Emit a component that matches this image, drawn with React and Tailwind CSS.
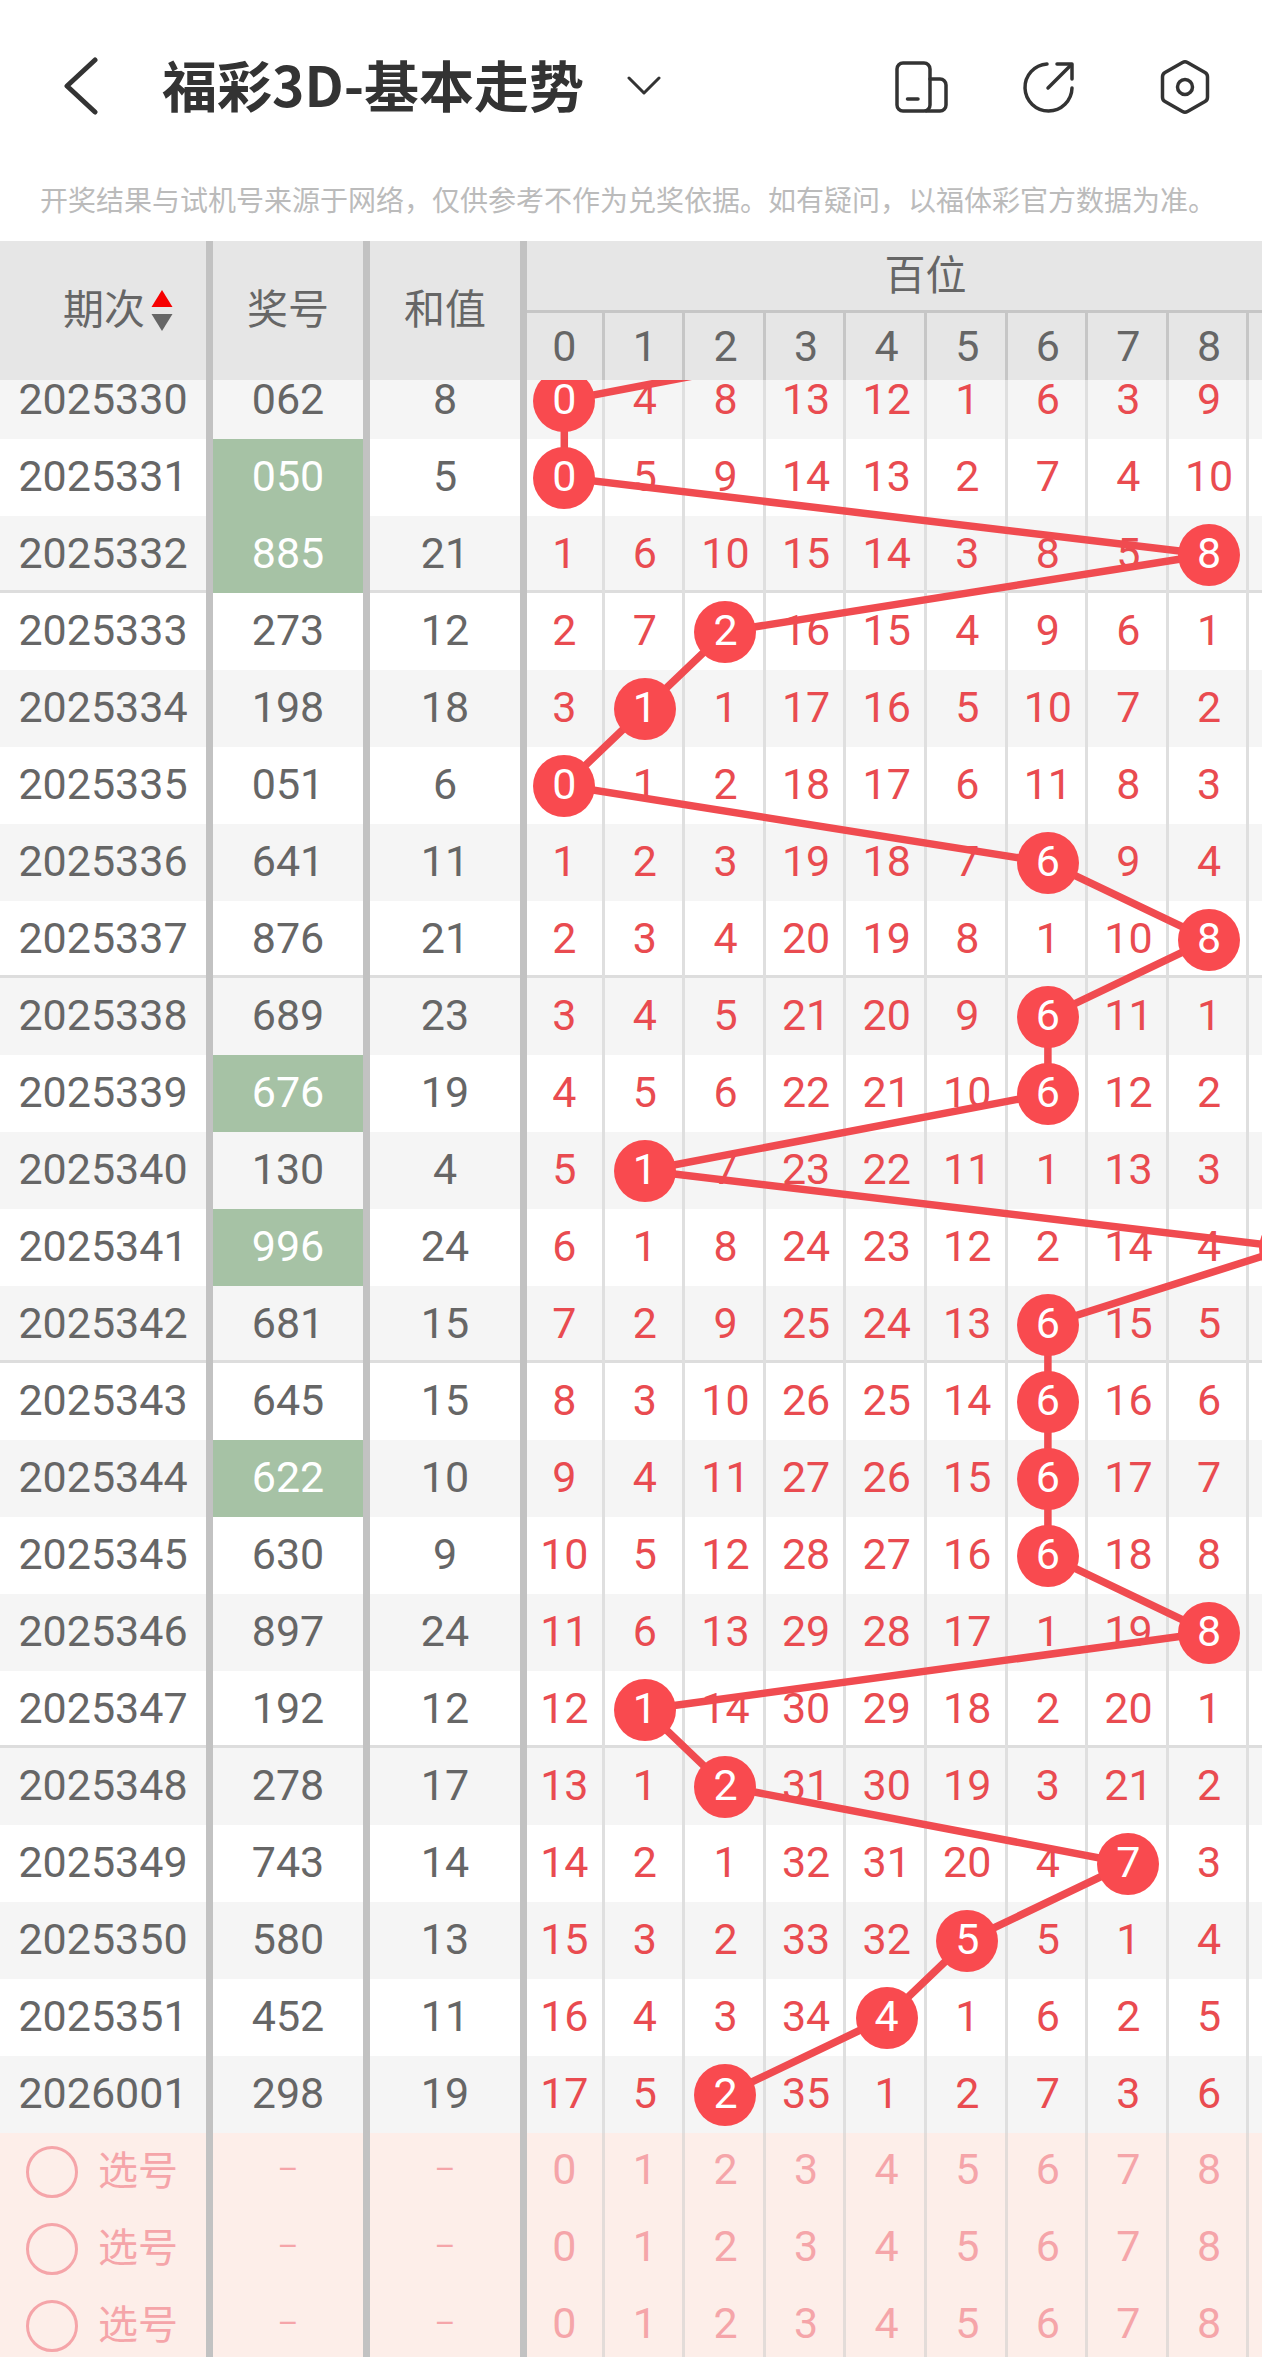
import React from 'react';

const numFont = "font-['Roboto','Noto_Sans_CJK_SC',sans-serif]";
const cjkFont = "font-['Noto_Sans_CJK_SC','Roboto',sans-serif]";

// period, draw, sum, miss counts for columns 0-8 (column 9 runs off the right edge)
const rows = [
    ['2025330', '062', 8, [0, 4, 8, 13, 12, 1, 6, 3, 9]],
    ['2025331', '050', 5, [0, 5, 9, 14, 13, 2, 7, 4, 10]],
    ['2025332', '885', 21, [1, 6, 10, 15, 14, 3, 8, 5, 8]],
    ['2025333', '273', 12, [2, 7, 2, 16, 15, 4, 9, 6, 1]],
    ['2025334', '198', 18, [3, 1, 1, 17, 16, 5, 10, 7, 2]],
    ['2025335', '051', 6, [0, 1, 2, 18, 17, 6, 11, 8, 3]],
    ['2025336', '641', 11, [1, 2, 3, 19, 18, 7, 6, 9, 4]],
    ['2025337', '876', 21, [2, 3, 4, 20, 19, 8, 1, 10, 8]],
    ['2025338', '689', 23, [3, 4, 5, 21, 20, 9, 6, 11, 1]],
    ['2025339', '676', 19, [4, 5, 6, 22, 21, 10, 6, 12, 2]],
    ['2025340', '130', 4, [5, 1, 7, 23, 22, 11, 1, 13, 3]],
    ['2025341', '996', 24, [6, 1, 8, 24, 23, 12, 2, 14, 4]],
    ['2025342', '681', 15, [7, 2, 9, 25, 24, 13, 6, 15, 5]],
    ['2025343', '645', 15, [8, 3, 10, 26, 25, 14, 6, 16, 6]],
    ['2025344', '622', 10, [9, 4, 11, 27, 26, 15, 6, 17, 7]],
    ['2025345', '630', 9, [10, 5, 12, 28, 27, 16, 6, 18, 8]],
    ['2025346', '897', 24, [11, 6, 13, 29, 28, 17, 1, 19, 8]],
    ['2025347', '192', 12, [12, 1, 14, 30, 29, 18, 2, 20, 1]],
    ['2025348', '278', 17, [13, 1, 2, 31, 30, 19, 3, 21, 2]],
    ['2025349', '743', 14, [14, 2, 1, 32, 31, 20, 4, 7, 3]],
    ['2025350', '580', 13, [15, 3, 2, 33, 32, 5, 5, 1, 4]],
    ['2025351', '452', 11, [16, 4, 3, 34, 4, 1, 6, 2, 5]],
    ['2026001', '298', 19, [17, 5, 2, 35, 1, 2, 7, 3, 6]],
];

const greenDraws = ['050', '885', '676', '996', '622'];
const digits = [0, 1, 2, 3, 4, 5, 6, 7, 8, 9];

const ROW_H = 77;
const colX = (d) => (d === 0 ? 564.3 : 644.9 + 80.6 * (d - 1));
const rowY = (i) => ROW_H / 2 + ROW_H * i;

const TrendLine = () => {
    const points = rows.map((r, i) => `${colX(Number(r[1][0]))},${rowY(i)}`);
    // the run continues upward from the previous period, hidden under the header
    points.unshift(`${colX(5)},${rowY(-1)}`);
    return (
        <svg className="absolute left-0 top-0 z-10 w-[1262px] h-[1771px] overflow-visible pointer-events-none">
            <polyline points={points.join(' ')} fill="none" stroke="#f04b50" strokeWidth="7.5" />
        </svg>
    );
};

// the separator is an inset line so numbers centre on the full cell width
const DigitCell = ({ first, children, className }) => (
    <div
        className={`${first ? 'w-[77.6px] pr-[3px]' : 'w-[80.6px]'} shrink-0 h-full flex items-center justify-center ${className}`}
    >
        {children}
    </div>
);

const DrawRow = ({ row, index }) => {
    const [period, draw, sum, misses] = row;
    const hit = Number(draw[0]);
    const striped = index % 2 === 0;
    // a rule closes every group of five periods
    const closesGroup = index % 5 === 2 && index < rows.length - 1;
    return (
        <div
            className={`flex h-[77px] text-[43px] text-[#666666] ${striped ? 'bg-[#f5f5f5]' : 'bg-white'} ${closesGroup ? 'shadow-[inset_0_-3px_0_#dddddd]' : ''}`}
        >
            <div className="w-[213px] shrink-0 border-r-[7px] border-[#c2c2c2] pb-[3px] flex items-center justify-center">{period}</div>
            <div className="w-[157px] shrink-0 border-r-[7px] border-[#c2c2c2] flex items-center justify-center">
                <div className={`w-full h-full pb-[3px] flex items-center justify-center ${greenDraws.includes(draw) ? 'bg-[#a6c2a5] text-white' : ''}`}>
                    {draw}
                </div>
            </div>
            <div className="w-[157px] shrink-0 border-r-[7px] border-[#c2c2c2] pb-[3px] flex items-center justify-center">{sum}</div>
            {digits.map((d) => (
                <DigitCell
                    key={d}
                    first={d === 0}
                    className={`shadow-[inset_-3px_0_0_#dfdfdf] text-[#e94b50] ${d === hit ? '' : 'pb-[3px]'}`}
                >
                    {d === hit ? (
                        <div className="relative z-20 w-[62px] h-[62px] pb-[3px] rounded-full bg-[#f94a4f] text-white flex items-center justify-center">
                            {misses[d]}
                        </div>
                    ) : (
                        misses[d]
                    )}
                </DigitCell>
            ))}
        </div>
    );
};

const PickRow = () => (
    <div className="flex h-[77px] shrink-0 text-[43px] bg-[#fdeee9] text-[#f5a5a9]">
        <div className="w-[213px] shrink-0 border-r-[7px] border-[#c2c2c2] flex items-center pl-[26px] gap-[20px]">
            <div className="w-[52px] h-[52px] rounded-full border-[3px] border-[#f5a5a9]"></div>
            <span className={`${cjkFont} text-[40px] leading-none pb-[7px]`}>选号</span>
        </div>
        <div className="w-[157px] shrink-0 border-r-[7px] border-[#c2c2c2] pb-[5px] flex items-center justify-center text-[32px]">–</div>
        <div className="w-[157px] shrink-0 border-r-[7px] border-[#c2c2c2] pb-[5px] flex items-center justify-center text-[32px]">–</div>
        {digits.map((d) => (
            <DigitCell key={d} first={d === 0} className="shadow-[inset_-3px_0_0_#e3dcd9] pb-[4px]">
                {d < 9 ? d : null}
            </DigitCell>
        ))}
    </div>
);

const TableHeader = () => (
    <div className={`relative z-30 flex h-[139px] bg-[#e6e6e6] text-[#666666] ${cjkFont} text-[41px]`}>
        <div className="w-[213px] shrink-0 border-r-[7px] border-[#c2c2c2] pb-[8px] flex items-center pl-[63px] gap-[6px]">
            <span className="leading-none">期次</span>
            <svg className="mt-[8px]" width="22" height="42" viewBox="0 0 22 42">
                <path d="M11 0 L21.5 17 L0.5 17 Z" fill="#f60000" />
                <path d="M0.5 24 L21.5 24 L11 41 Z" fill="#666666" />
            </svg>
        </div>
        <div className="w-[157px] shrink-0 border-r-[7px] border-[#c2c2c2] pb-[8px] flex items-center justify-center leading-none">奖号</div>
        <div className="w-[157px] shrink-0 border-r-[7px] border-[#c2c2c2] pb-[8px] flex items-center justify-center leading-none">和值</div>
        <div className="flex flex-col shrink-0">
            <div className="h-[72px] border-b-[3px] border-[#c6c6c6] pb-[7px] pr-[6px] flex items-center justify-center leading-none">百位</div>
            <div className={`flex h-[67px] ${numFont} text-[43px]`}>
                {digits.map((d) => (
                    <DigitCell key={d} first={d === 0} className="shadow-[inset_-3px_0_0_#c6c6c6]">
                        {d < 9 ? d : null}
                    </DigitCell>
                ))}
            </div>
        </div>
    </div>
);

const NavBar = () => (
    <div className="flex items-center h-[172px] text-[#333333]">
        <svg className="ml-[62px] shrink-0" width="38" height="58" viewBox="0 0 38 58" fill="none" stroke="#333333" strokeWidth="5" strokeLinecap="round" strokeLinejoin="round">
            <path d="M33 3 L5 29 L33 55" />
        </svg>
        <h1 className={`ml-[62px] pb-[5px] ${cjkFont} font-bold text-[55px] leading-none`}>福彩3D-基本走势</h1>
        <svg className="ml-[43px] mt-[-1px] shrink-0" width="34" height="20" viewBox="0 0 34 20" fill="none" stroke="#333333" strokeWidth="3" strokeLinecap="round" strokeLinejoin="round">
            <path d="M2 2 L17 17 L32 2" />
        </svg>
        <div className="ml-auto mr-[52px] mt-[2px] flex items-center">
            {/* phone and tablet */}
            <svg width="54" height="52" viewBox="0 0 54 52" fill="none" stroke="#333333" strokeWidth="3.5" strokeLinecap="round" strokeLinejoin="round">
                <rect x="2" y="2" width="33" height="48" rx="6" />
                <path d="M35 18 H45 a6 6 0 0 1 6 6 V44 a6 6 0 0 1 -6 6 H31" />
                <path d="M12.5 38 H23" />
            </svg>
            {/* share */}
            <svg className="ml-[73px]" width="54" height="54" viewBox="0 0 54 54" fill="none" stroke="#333333" strokeWidth="3.5" strokeLinecap="round" strokeLinejoin="round">
                <path d="M25 4 A23.5 23.5 0 1 0 50 28" />
                <path d="M26 28 L49 5" />
                <path d="M35 4 H50 V19" />
            </svg>
            {/* settings nut */}
            <svg className="ml-[84px]" width="50" height="56" viewBox="0 0 50 56" fill="none" stroke="#333333" strokeWidth="3.5" strokeLinecap="round" strokeLinejoin="round">
                <path d="M22.5 3.5 a5 5 0 0 1 5 0 L45 13.5 a5 5 0 0 1 2.5 4.3 V38.2 a5 5 0 0 1 -2.5 4.3 L27.5 52.5 a5 5 0 0 1 -5 0 L5 42.5 a5 5 0 0 1 -2.5 -4.3 V17.8 a5 5 0 0 1 2.5 -4.3 Z" />
                <circle cx="25" cy="28" r="7.5" />
            </svg>
        </div>
    </div>
);

const App = () => {
    return (
        <div className={`w-[1262px] h-[2357px] overflow-hidden bg-white ${numFont}`}>
            <NavBar />
            <div className={`h-[69px] pb-[15px] pl-[40px] flex items-center ${cjkFont} text-[28px] leading-none text-[#bbbbbb] whitespace-nowrap`}>
                开奖结果与试机号来源于网络，仅供参考不作为兑奖依据。如有疑问，以福体彩官方数据为准。
            </div>
            <TableHeader />
            <div className="relative mt-[-18px]">
                {rows.map((row, i) => (
                    <DrawRow key={row[0]} row={row} index={i} />
                ))}
                <TrendLine />
                <PickRow />
                <PickRow />
                <PickRow />
            </div>
        </div>
    );
};

export default App;
